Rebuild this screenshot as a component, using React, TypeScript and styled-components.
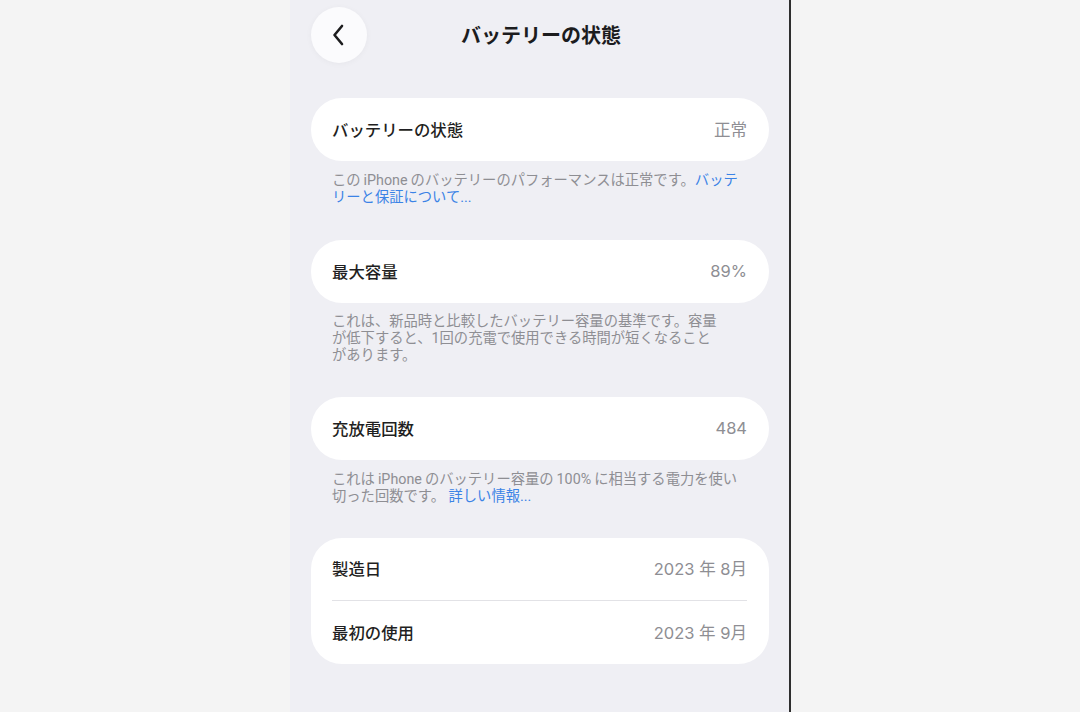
import React from "react";
import styled, { createGlobalStyle } from "styled-components";

const GlobalStyle = createGlobalStyle`
  html, body {
    margin: 0;
    padding: 0;
    background: #f4f4f4;
  }
  body {
    font-family: "Noto Sans CJK JP", "Noto Sans", "Liberation Sans", sans-serif;
    -webkit-font-smoothing: antialiased;
  }
`;

const Stage = styled.div`
  display: flex;
  width: 1080px;
  height: 712px;
  overflow: hidden;
  background: #f4f4f4;
`;

const Gutter = styled.div`
  width: 290px;
  flex: none;
`;

const Screen = styled.div`
  width: 501px;
  flex: none;
  height: 712px;
  box-sizing: border-box;
  background: #efeff4;
  border-right: 2px solid #2e2e2e;
  padding: 7px 20px 0 21px;
  display: flex;
  flex-direction: column;
`;

const Header = styled.header`
  position: relative;
  height: 56px;
  display: flex;
  align-items: center;
  justify-content: center;
  margin-bottom: 35px;
`;

const BackButton = styled.button`
  position: absolute;
  left: 0;
  top: 0;
  width: 56px;
  height: 56px;
  border-radius: 50%;
  border: none;
  background: #fbfbfd;
  box-shadow: 0 1px 6px rgba(0, 0, 0, 0.04);
  display: flex;
  align-items: center;
  justify-content: center;
  padding: 0;
  cursor: pointer;
`;

const Title = styled.h1`
  margin: 0 0 1px 0;
  font-size: 20px;
  font-weight: 700;
  color: #1c1c1e;
  padding-left: 2px;
`;

const Section = styled.section<{ $gap: number }>`
  margin-bottom: ${(p) => p.$gap}px;
`;

const Card = styled.div`
  background: #ffffff;
  border-radius: 31px;
  padding: 0 22px 0 21px;
`;

const Row = styled.div<{ $divider?: boolean }>`
  height: 63px;
  padding-bottom: 2px;
  display: flex;
  align-items: center;
  justify-content: space-between;
  box-sizing: border-box;
  border-bottom: ${(p) => (p.$divider ? "1px solid #e2e2e6" : "none")};
`;

const Label = styled.span`
  font-size: 16.4px;
  font-weight: 500;
  color: #1f1f22;
`;

const Value = styled.span`
  font-family: "Inter", "Noto Sans CJK JP", sans-serif;
  font-size: 16.5px;
  font-weight: 400;
  color: #8e8e93;
`;

const Note = styled.p<{ $top: number }>`
  margin: ${(p) => p.$top}px 0 0 0;
  padding: 0 21px;
  font-family: "Roboto", "Noto Sans CJK JP", sans-serif;
  font-size: 14.3px;
  line-height: 17px;
  color: #8e8e93;
`;

const Latin = styled.span`
  margin: 0 3px;
`;

const Link = styled.a`
  color: #3b83e6;
  text-decoration: none;
`;

const Chevron = () => (
  <svg width="16" height="22" viewBox="0 0 16 22" fill="none">
    <path
      d="M11 2 L3.5 11 L11 20"
      stroke="#1c1c1e"
      strokeWidth="2.6"
      strokeLinecap="round"
      strokeLinejoin="round"
    />
  </svg>
);

export default function App() {
  return (
    <>
      <GlobalStyle />
      <Stage>
        <Gutter />
        <Screen>
          <Header>
            <BackButton aria-label="戻る">
              <Chevron />
            </BackButton>
            <Title>バッテリーの状態</Title>
          </Header>

          <Section $gap={34}>
            <Card>
              <Row>
                <Label>バッテリーの状態</Label>
                <Value>正常</Value>
              </Row>
            </Card>
            <Note $top={11}>
              この<Latin>iPhone</Latin>のバッテリーのパフォーマンスは正常です。
              <Link href="#">バッテ</Link>
              <br />
              <Link href="#">リーと保証について...</Link>
            </Note>
          </Section>

          <Section $gap={33}>
            <Card>
              <Row>
                <Label>最大容量</Label>
                <Value>89%</Value>
              </Row>
            </Card>
            <Note $top={10}>
              これは、新品時と比較したバッテリー容量の基準です。容量
              <br />
              が低下すると、1回の充電で使用できる時間が短くなること
              <br />
              があります。
            </Note>
          </Section>

          <Section $gap={33}>
            <Card>
              <Row>
                <Label>充放電回数</Label>
                <Value>484</Value>
              </Row>
            </Card>
            <Note $top={11}>
              これは<Latin>iPhone</Latin>のバッテリー容量の<Latin>100%</Latin>に相当する電力を使い
              <br />
              切った回数です。 <Link href="#">詳しい情報...</Link>
            </Note>
          </Section>

          <Section $gap={0}>
            <Card>
              <Row $divider>
                <Label>製造日</Label>
                <Value>2023 年 8月</Value>
              </Row>
              <Row>
                <Label>最初の使用</Label>
                <Value>2023 年 9月</Value>
              </Row>
            </Card>
          </Section>
        </Screen>
      </Stage>
    </>
  );
}
